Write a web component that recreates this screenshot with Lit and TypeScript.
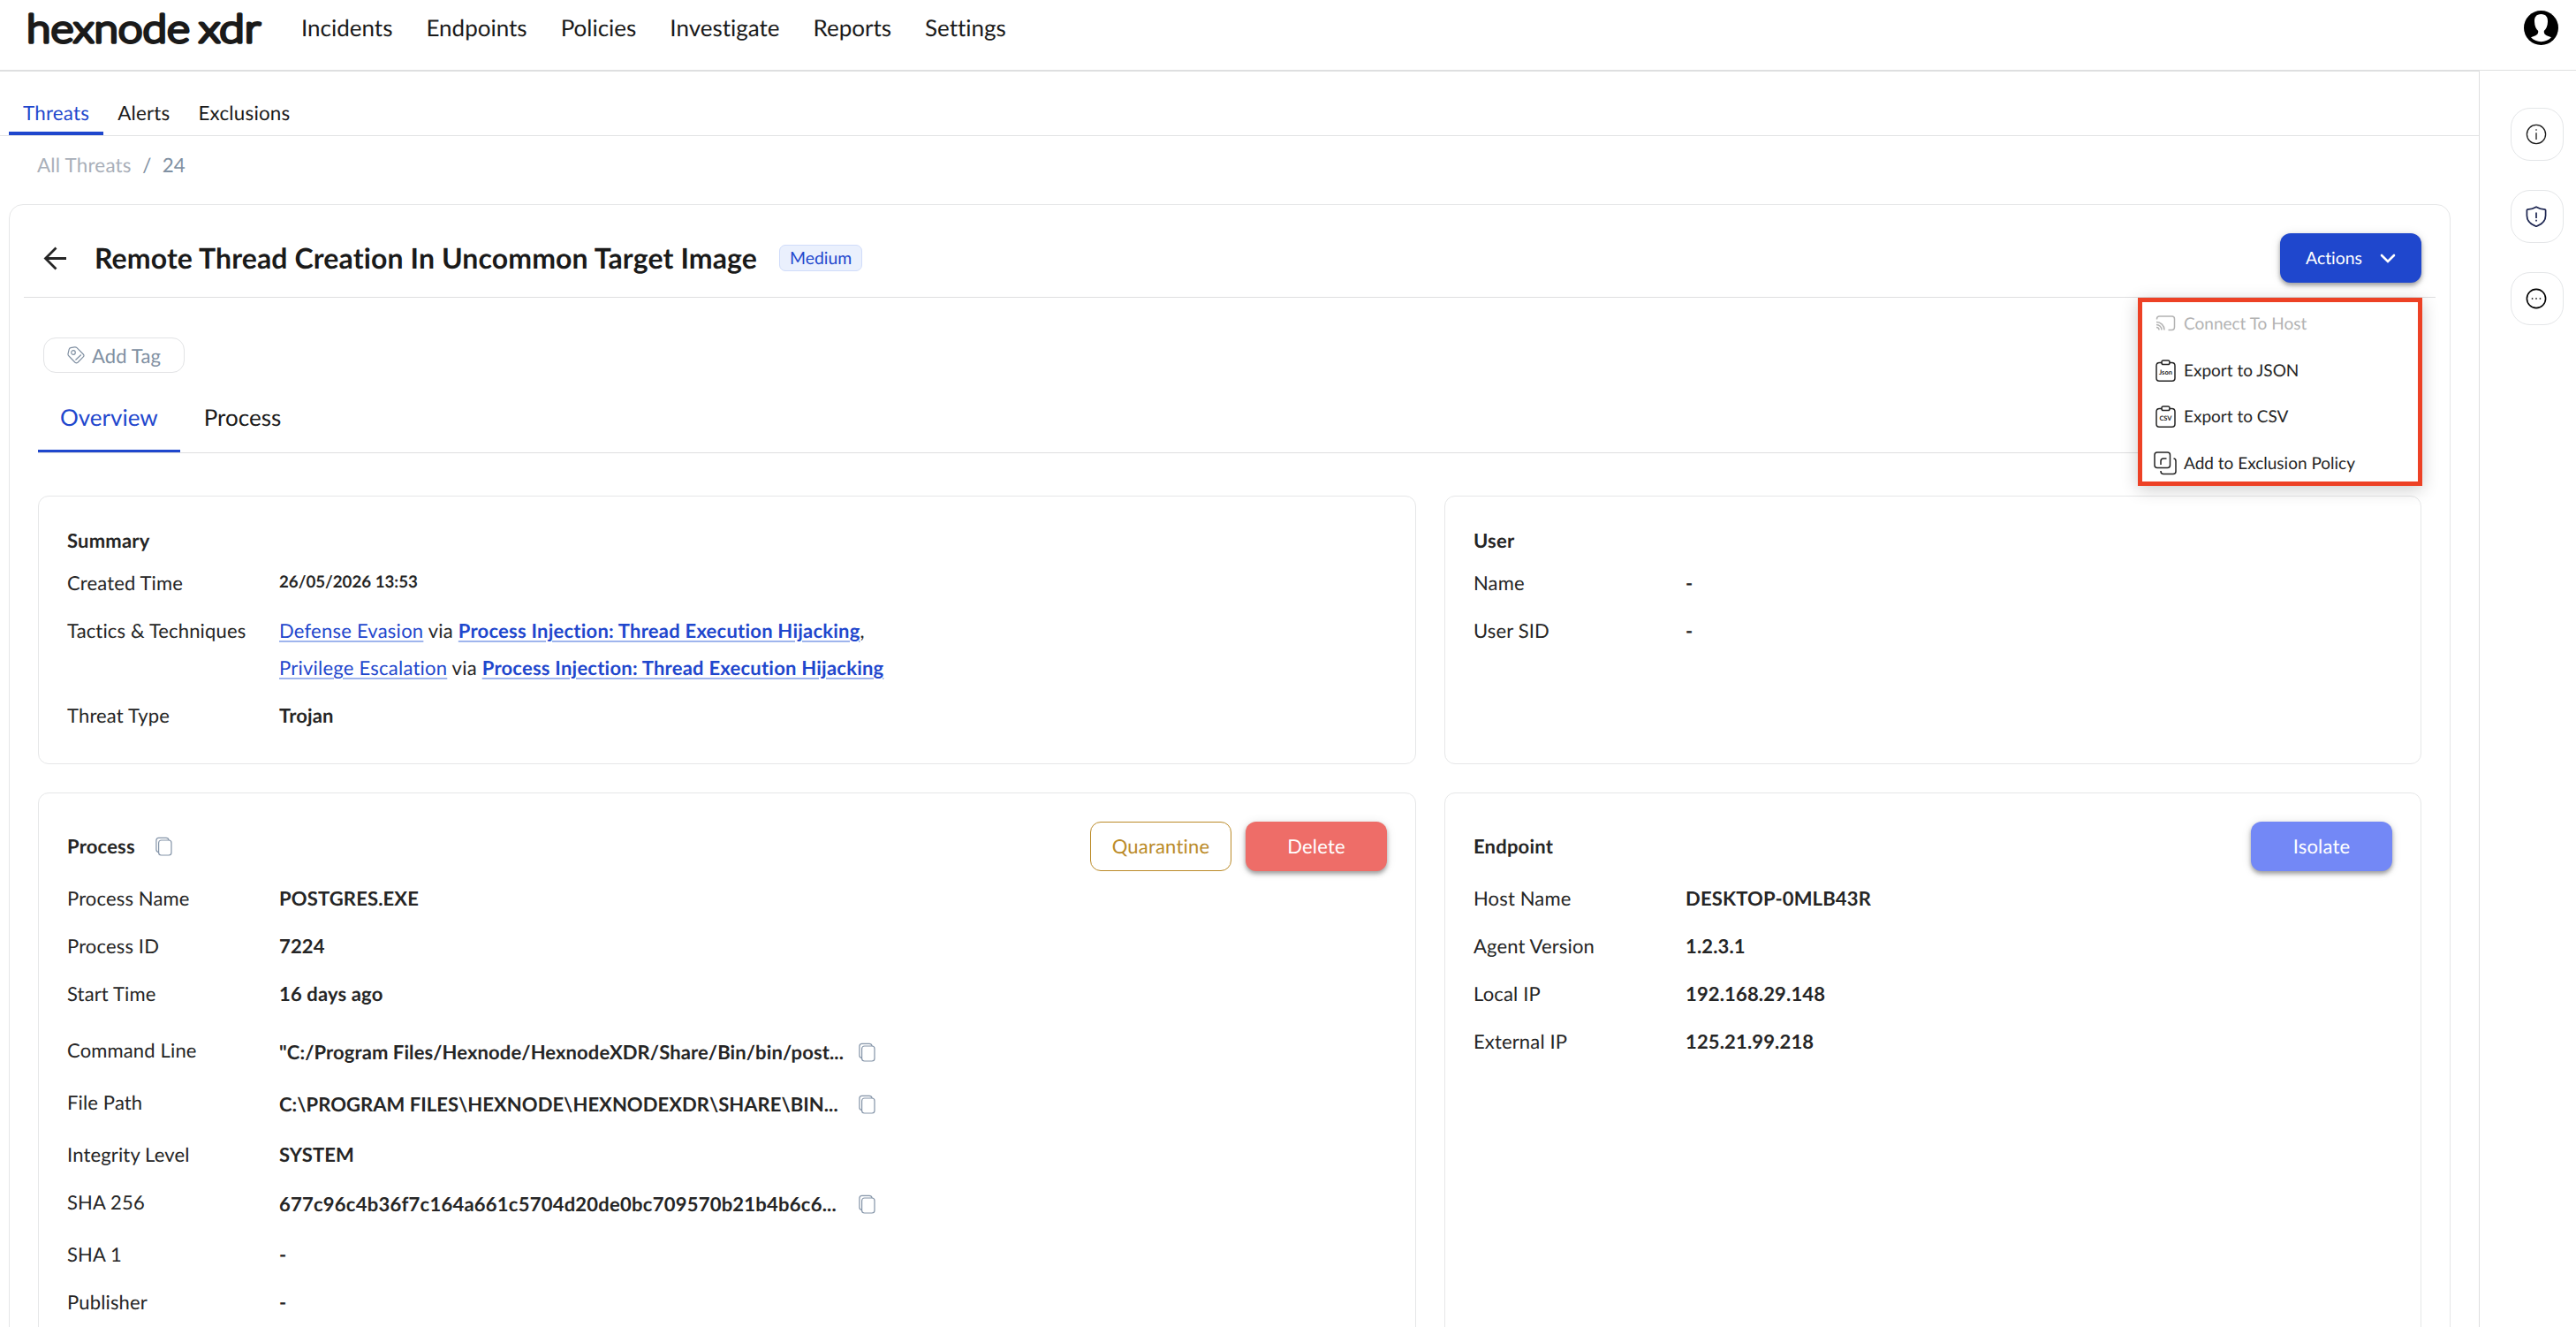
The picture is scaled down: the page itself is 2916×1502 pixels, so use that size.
import { css, html, LitElement, nothing, svg, TemplateResult } from 'lit';
import { customElement, property } from 'lit/decorators.js';
import { classMap } from 'lit/directives/class-map.js';
import { styleMap } from 'lit/directives/style-map.js';

interface DetailRow {
  label: string;
  value: string | TemplateResult;
  copy?: boolean;
  spaced?: boolean;
  small?: boolean;
  tracking?: number;
}

const copyIcon = html`
  <svg class="copy-icon" width="22" height="22" viewBox="0 0 22 22" fill="none" stroke="#8494a8" stroke-width="1.2">
    <rect x="4.6" y="4" width="14.4" height="17" rx="3" />
    <path d="M4.6 17.6c-2-.4-2.7-1.4-2.7-3.2V4.2c0-1.8 1-2.8 2.8-2.8h8.3c1.8 0 2.8.8 3.1 2.6" />
  </svg>
`;

@customElement('xdr-details')
export class XdrDetails extends LitElement {
  static override styles = css`
    :host {
      display: block;
    }

    .row {
      display: flex;
      font-size: 22px;
      line-height: 54px;
      letter-spacing: 0.15px;
    }

    .row.copy {
      height: 59px;
    }

    .row.spaced {
      margin-top: 10px;
    }

    .label {
      width: 240px;
      flex: none;
    }

    .value {
      display: flex;
      align-items: center;
      font-weight: 700;
    }

    .copy .value {
      height: 58px;
    }

    .copy .text {
      width: 655px;
    }

    .small .value {
      height: 49px;
      font-size: 18.7px;
      letter-spacing: 0;
    }

    .lines {
      padding: 6px 0;
      line-height: 42px;
      font-weight: 400;
      letter-spacing: 0.23px;
    }

    .link {
      color: #1f47cd;
      text-decoration: underline 2px #9fb5ed;
      text-underline-offset: 3px;
    }

    .strong {
      font-weight: 700;
    }
  `;

  @property({ attribute: false })
  rows: DetailRow[] = [];

  override render() {
    return this.rows.map(
      row => html`
        <div class=${classMap({ row: true, copy: !!row.copy, spaced: !!row.spaced, small: !!row.small })}>
          <span class="label">${row.label}</span>
          <div class="value">
            <span
              class="text"
              style=${row.tracking === undefined ? nothing : styleMap({ letterSpacing: `${row.tracking}px` })}
              >${row.value}</span
            >
            ${row.copy ? copyIcon : nothing}
          </div>
        </div>
      `
    );
  }
}

const techniques = html`
  <div class="lines">
    <div>
      <span class="link">Defense Evasion</span> via
      <span class="link strong">Process Injection: Thread Execution Hijacking</span>,
    </div>
    <div>
      <span class="link">Privilege Escalation</span> via
      <span class="link strong">Process Injection: Thread Execution Hijacking</span>
    </div>
  </div>
`;

const summaryRows: DetailRow[] = [
  { label: 'Created Time', value: '26/05/2026 13:53', small: true },
  { label: 'Tactics & Techniques', value: techniques },
  { label: 'Threat Type', value: 'Trojan' },
];

const userRows: DetailRow[] = [
  { label: 'Name', value: '-' },
  { label: 'User SID', value: '-' },
];

const processRows: DetailRow[] = [
  { label: 'Process Name', value: 'POSTGRES.EXE' },
  { label: 'Process ID', value: '7224' },
  { label: 'Start Time', value: '16 days ago' },
  {
    label: 'Command Line',
    value: '"C:/Program Files/Hexnode/HexnodeXDR/Share/Bin/bin/post...',
    copy: true,
    spaced: true,
    tracking: 0.1,
  },
  {
    label: 'File Path',
    value: 'C:\\PROGRAM FILES\\HEXNODE\\HEXNODEXDR\\SHARE\\BIN...',
    copy: true,
    tracking: 0.04,
  },
  { label: 'Integrity Level', value: 'SYSTEM' },
  {
    label: 'SHA 256',
    value: '677c96c4b36f7c164a661c5704d20de0bc709570b21b4b6c6...',
    copy: true,
    tracking: 0.24,
  },
  { label: 'SHA 1', value: '-' },
  { label: 'Publisher', value: '-' },
];

const endpointRows: DetailRow[] = [
  { label: 'Host Name', value: 'DESKTOP-0MLB43R' },
  { label: 'Agent Version', value: '1.2.3.1' },
  { label: 'Local IP', value: '192.168.29.148' },
  { label: 'External IP', value: '125.21.99.218' },
];

const clipboard = (text: string, size: number) => svg`
  <path d="M9.2 4.5H6.5Q3 4.5 3 8V22Q3 25.2 6.3 25.2H20.7Q24 25.2 24 22V8Q24 4.5 20.5 4.5H17.8" />
  <rect x="9" y="2" width="9" height="4.6" rx="1.8" />
  <text x="13.5" y="18" font-size=${size} text-anchor="middle" fill="currentColor" stroke="none" font-weight="700">${text}</text>
`;

const menuItems = [
  {
    label: 'Connect To Host',
    disabled: true,
    icon: svg`
      <path d="M3.500 8.500V8Q3.500 5 6.500 5H20.500Q23.500 5 23.500 8V17Q23.500 20.500 20.500 20.500H16.500" />
      <path d="M3 11.500a9 9 0 0 1 9 9M3 14.500a6 6 0 0 1 6 6M3 17.600a3 3 0 0 1 3 3" />
    `,
  },
  { label: 'Export to JSON', disabled: false, icon: clipboard('Json', 7.5) },
  { label: 'Export to CSV', disabled: false, icon: clipboard('CSV', 7.5) },
  {
    label: 'Add to Exclusion Policy',
    disabled: false,
    icon: svg`
      <rect x="1" y="1" width="17.5" height="17.5" rx="3" />
      <path d="M8 15V11Q8 8 11 8H14.5M22.5 8Q25 8 25 11V22.5Q25 25.5 22 25.5H11Q8 25.5 8 22.5V22" />
    `,
  },
];

@customElement('app-root')
export class AppRoot extends LitElement {
  static override styles = css`
    :host {
      display: block;
      height: 1502px;
      overflow: hidden;
      background: #fff;
      color: #252525;
      font-family: Lato, 'Liberation Sans', sans-serif;
      font-size: 22px;
      font-variant-ligatures: none;
      text-rendering: geometricPrecision;
    }

    * {
      box-sizing: border-box;
    }

    svg {
      display: block;
      flex: none;
    }

    .topbar {
      display: flex;
      align-items: center;
      height: 80px;
      padding: 0 20px 16px 30px;
      border-bottom: 1px solid #dedfe0;
      color: #1a1a1a;
    }

    .nav {
      display: flex;
      flex: 1;
      gap: 38px;
      margin-left: 41px;
      padding-bottom: 1px;
      font-size: 26px;
    }

    .body {
      display: flex;
    }

    .main {
      width: 2806px;
      border-top: 1px solid #dedfe0;
    }

    .tabs {
      display: flex;
      height: 73px;
      padding-left: 10px;
      border-bottom: 1px solid #e2e3e5;
      color: #1a1a1a;
      font-size: 22.4px;
      letter-spacing: 0.2px;
    }

    .tab {
      padding: 25px 16px 0;
      border-bottom: 4px solid transparent;
      line-height: 43px;
    }

    .tab.active,
    .subtab.active {
      border-color: #1f47cd;
      color: #1f47cd;
    }

    .crumbs {
      display: flex;
      gap: 12.5px;
      height: 77px;
      padding-left: 42px;
      line-height: 65px;
      color: #8090a2;
      font-size: 22.4px;
    }

    .crumb-parent {
      color: #a9afb9;
      letter-spacing: 0.2px;
    }

    .panel {
      width: 2764px;
      height: 1300px;
      margin-left: 10px;
      border: 1px solid #e6e7e8;
      border-radius: 16px;
    }

    .panel-head {
      position: relative;
      display: flex;
      align-items: center;
      height: 105px;
      margin: 0 16px;
      padding: 32px 16px 16px 22px;
      border-bottom: 1px solid #dedfe0;
    }

    .title {
      margin: 0 25px 0 31px;
      padding-bottom: 2px;
      font-size: 32px;
      font-weight: 700;
      letter-spacing: 0.12px;
      color: #1a1a1a;
    }

    .badge {
      height: 30px;
      padding: 0 11px;
      border: 1px solid #d0dcfa;
      border-radius: 7px;
      background: #eaf0fd;
      color: #1f47cd;
      font-size: 19.4px;
      line-height: 29px;
    }

    .button {
      display: flex;
      align-items: center;
      justify-content: center;
      width: 160px;
      height: 56px;
      border-radius: 12px;
      color: #fff;
      letter-spacing: 0.2px;
      box-shadow: 0 3px 5px rgba(0, 0, 0, 0.35), 0 1px 12px rgba(0, 0, 0, 0.1);
    }

    .button.actions {
      gap: 20px;
      margin-left: auto;
      padding-top: 1px;
      background: #1f47cd;
      font-size: 19.4px;
      letter-spacing: 0;
    }

    .button.quarantine {
      border: 1px solid #bb8b29;
      color: #bb8b29;
      box-shadow: none;
    }

    .button.delete {
      background: #ee6d68;
    }

    .button.isolate {
      background: #7388f6;
    }

    /* open menu of the Actions button */
    .menu {
      position: absolute;
      top: 105px;
      right: 15px;
      width: 322px;
      height: 213px;
      padding: 0 13px;
      border: 5px solid #ed4125;
      background: #fff;
      box-shadow: 0 4px 18px rgba(0, 0, 0, 0.2);
      font-size: 19px;
    }

    .menu-item {
      display: flex;
      align-items: center;
      gap: 7px;
      height: 52.7px;
    }

    .menu-item:first-child {
      margin-top: -2px;
    }

    .menu-item.disabled {
      color: #b3b3b3;
    }

    .add-tag {
      display: flex;
      align-items: center;
      justify-content: center;
      gap: 8px;
      width: 160px;
      height: 40px;
      margin: 45px 0 0 38px;
      border: 1px solid #e2e3e5;
      border-radius: 14px;
      color: #8090a2;
      letter-spacing: 0.15px;
    }

    .subtabs {
      display: flex;
      gap: 2px;
      height: 91px;
      margin: 0 32px;
      border-bottom: 1px solid #dedfe0;
      font-size: 26px;
      color: #1a1a1a;
    }

    .subtab {
      padding: 14px 25px 0;
      border-bottom: 3px solid transparent;
      line-height: 73px;
    }

    .cards {
      display: grid;
      grid-template-columns: 1560px 1106px;
      grid-template-rows: 304px 700px;
      gap: 32px;
      margin: 48px 32px 0;
    }

    .card {
      padding: 32px;
      border: 1px solid #e6e7e8;
      border-radius: 12px;
    }

    .card-head {
      display: flex;
      align-items: center;
      height: 35px;
      margin-bottom: 4px;
      font-weight: 700;
      letter-spacing: 0.2px;
    }

    .card-head.tall {
      height: 56px;
      line-height: 54px;
    }

    .card-head .copy-icon {
      margin-left: 22px;
    }

    .card-buttons {
      display: flex;
      gap: 16px;
      margin-left: auto;
      font-weight: 400;
    }

    .rail {
      display: flex;
      flex: 1;
      flex-direction: column;
      align-items: center;
      gap: 33px;
      height: 1422px;
      padding: 42px 0 0 20px;
      border-left: 1px solid #dedfe0;
    }

    .rail-button {
      display: flex;
      align-items: center;
      justify-content: center;
      width: 60px;
      height: 60px;
      padding: 0 2px 1px 0;
      border: 1px solid #e4e6e8;
      border-radius: 22px;
    }
  `;

  private renderTopbar() {
    return html`
      <div class="topbar">
        <svg
          width="270"
          height="64"
          viewBox="0 0 270 64"
          font-family="Lato"
          font-size="44"
          font-weight="300"
          fill="#1a1a1a"
          stroke="#1a1a1a"
          stroke-width="3.4"
          stroke-linejoin="round"
        >
          <text x="0" y="48" textLength="185" lengthAdjust="spacingAndGlyphs">hexnode</text>
          <text x="195" y="48" textLength="70" lengthAdjust="spacingAndGlyphs">xdr</text>
        </svg>
        <div class="nav">
          ${['Incidents', 'Endpoints', 'Policies', 'Investigate', 'Reports', 'Settings'].map(
            name => html`<span>${name}</span>`
          )}
        </div>
        <svg width="39" height="39" viewBox="0 0 39 39">
          <circle cx="19.5" cy="19.5" r="19.5" fill="#000" />
          <path
            d="M19.5 4C14 4 11.8 7.5 12 12.5c.1 5 2 8.5 4.2 10.5.3 2.5-.8 4.3-3 5.2L8 30.3c2.5 3 7 4.9 11.5 4.9s9-1.9 11.5-4.9l-5.2-2.1c-2.2-.9-3.3-2.7-3-5.2 2.2-2 4.1-5.5 4.2-10.5C27.2 7.5 25 4 19.5 4z"
            fill="#fff"
          />
        </svg>
      </div>
    `;
  }

  private renderMenu() {
    return html`
      <div class="menu">
        ${menuItems.map(
          item => html`
            <div class=${classMap({ 'menu-item': true, disabled: item.disabled })}>
              <svg width="27" height="27" viewBox="0 0 27 27" fill="none" stroke="currentColor" stroke-width="1.5">
                ${item.icon}
              </svg>
              <span>${item.label}</span>
            </div>
          `
        )}
      </div>
    `;
  }

  private renderPanelHead() {
    return html`
      <div class="panel-head">
        <svg width="27" height="27" viewBox="0 0 27 27" fill="none" stroke="#252525" stroke-width="2.8">
          <path d="M26 13.5H3M14.5 1.5l-12 12 12 12" />
        </svg>
        <div class="title">Remote Thread Creation In Uncommon Target Image</div>
        <div class="badge">Medium</div>
        <div class="button actions">
          Actions
          <svg width="18" height="12" viewBox="0 0 18 12" fill="none" stroke="#fff" stroke-width="2.6">
            <path d="M2 2l7 7 7-7" stroke-linecap="round" />
          </svg>
        </div>
        ${this.renderMenu()}
      </div>
    `;
  }

  private renderCards() {
    return html`
      <div class="cards">
        <div class="card">
          <div class="card-head">Summary</div>
          <xdr-details .rows=${summaryRows}></xdr-details>
        </div>
        <div class="card">
          <div class="card-head">User</div>
          <xdr-details .rows=${userRows}></xdr-details>
        </div>
        <div class="card">
          <div class="card-head tall">
            Process ${copyIcon}
            <div class="card-buttons">
              <div class="button quarantine">Quarantine</div>
              <div class="button delete">Delete</div>
            </div>
          </div>
          <xdr-details .rows=${processRows}></xdr-details>
        </div>
        <div class="card">
          <div class="card-head tall">
            Endpoint
            <div class="card-buttons">
              <div class="button isolate">Isolate</div>
            </div>
          </div>
          <xdr-details .rows=${endpointRows}></xdr-details>
        </div>
      </div>
    `;
  }

  private renderRail() {
    return html`
      <div class="rail">
        <div class="rail-button">
          <svg width="24" height="24" viewBox="0 0 24 24" fill="none" stroke="#1a1a1a" stroke-width="1.3">
            <circle cx="12" cy="12" r="10.6" />
            <path d="M12 10.3V18M12 6.2v1.6" />
          </svg>
        </div>
        <div class="rail-button">
          <svg width="24" height="24" viewBox="0 0 24 24" fill="none" stroke="#1c2550" stroke-width="1.7">
            <path d="M12 1.2c3 1.8 6.2 2.7 10 2.9.6 0 .6.4.6.9v6c0 6-4.6 10-10.6 12.3C6 21 1.4 17 1.4 11V5c0-.5 0-.9.6-.9C5.8 3.9 9 3 12 1.2z" />
            <path d="M12 7.5V14M12 15.8v1.7" />
          </svg>
        </div>
        <div class="rail-button">
          <svg width="24" height="24" viewBox="0 0 24 24" fill="none" stroke="#000" stroke-width="1.6">
            <circle cx="12" cy="12" r="10.6" />
            <path d="M6.8 12h1.5M11.25 12h1.5M15.7 12h1.5" />
          </svg>
        </div>
      </div>
    `;
  }

  override render() {
    return html`
      ${this.renderTopbar()}
      <div class="body">
        <div class="main">
          <div class="tabs">
            <span class="tab active">Threats</span>
            <span class="tab">Alerts</span>
            <span class="tab">Exclusions</span>
          </div>
          <div class="crumbs">
            <span class="crumb-parent">All Threats</span>
            <span>/</span>
            <span>24</span>
          </div>
          <div class="panel">
            ${this.renderPanelHead()}
            <div class="add-tag">
              <svg width="20" height="20" viewBox="0 0 20 20" fill="none" stroke="#8090a2" stroke-width="1.2">
                <path d="M2.2 3.4Q2.5 2 4 1.7L8.5.9Q10 .7 11 1.7L18.3 9Q19.7 10.4 18.3 11.8L12 18.2Q10.5 19.5 9 18.2L2 11Q.8 9.9 1 8.5z" />
                <circle cx="7" cy="7" r="2.3" />
                <path d="M9.5 15.5l6.3-6" />
              </svg>
              Add Tag
            </div>
            <div class="subtabs">
              <span class="subtab active">Overview</span>
              <span class="subtab">Process</span>
            </div>
            ${this.renderCards()}
          </div>
        </div>
        ${this.renderRail()}
      </div>
    `;
  }
}
